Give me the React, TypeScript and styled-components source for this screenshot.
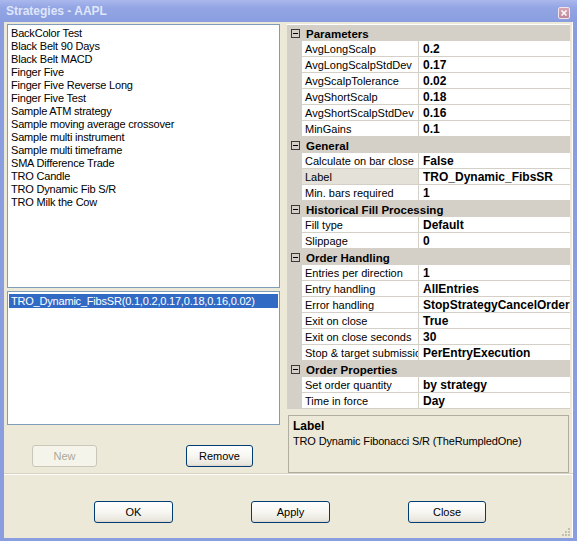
import React from "react";
import styled, { createGlobalStyle } from "styled-components";

const GlobalStyle = createGlobalStyle`
	html, body {
		margin: 0;
		padding: 0;
		background: #fff;
	}
	body {
		font-family: "Liberation Sans", Arial, sans-serif;
		font-size: 11px;
		color: #000;
	}
`;

const Window = styled.div`
	width: 577px;
	height: 541px;
	display: flex;
	flex-direction: column;
	background: #8a9ddf;
	overflow: hidden;
`;

const TitleBar = styled.div`
	height: 22px;
	flex: none;
	display: flex;
	align-items: center;
	justify-content: space-between;
	padding: 0 7px 0 6px;
	background: linear-gradient(#aab8ec 0%, #93a5e4 35%, #8a9ddf 100%);
`;

const TitleText = styled.span`
	font-weight: bold;
	font-size: 12px;
	color: #dfe6fa;
`;

const CloseBox = styled.div`
	width: 10px;
	height: 10px;
	margin-top: 3px;
	border: 1px solid #f2e4ea;
	border-radius: 2px;
	background: linear-gradient(#d9a6b4, #c0889b);
	display: flex;
	align-items: center;
	justify-content: center;
`;

const Frame = styled.div`
	flex: 1;
	display: flex;
	padding: 0 4px 3px 4px;
	min-height: 0;
`;

const Client = styled.div`
	position: relative;
	flex: 1;
	display: flex;
	flex-direction: column;
	background: #ece9d8;
	box-shadow: inset -1px 0 0 #fff;
`;

const TopPanel = styled.div`
	height: 452px;
	display: flex;
	gap: 7px;
	padding: 2px 0 0 3px;
	box-sizing: border-box;
	border-bottom: 1px solid #d6d2c2;
`;

const LeftColumn = styled.div`
	width: 273px;
	display: flex;
	flex-direction: column;
`;

const ListBox = styled.div<{ $h: number; $top?: number }>`
	height: ${(p) => p.$h}px;
	margin-top: ${(p) => p.$top || 0}px;
	box-sizing: border-box;
	border: 1px solid #7f9db9;
	background: #fff;
	padding: 2px 1px;
	overflow: hidden;
`;

const ListItem = styled.div<{ $selected?: boolean }>`
	height: ${(p) => (p.$selected ? 14 : 13)}px;
	line-height: ${(p) => (p.$selected ? 14 : 13)}px;
	padding-left: 2px;
	letter-spacing: -0.2px;
	white-space: nowrap;
	background: ${(p) => (p.$selected ? "#316ac5" : "transparent")};
	color: ${(p) => (p.$selected ? "#fff" : "#000")};
`;

const ListButtons = styled.div`
	display: flex;
	margin-top: 20px;
	padding-left: 25px;
	gap: 89px;
`;

const Button = styled.button<{ $w: number }>`
	width: ${(p) => p.$w}px;
	height: 22px;
	padding: 0;
	box-sizing: border-box;
	border: 1px solid #003c74;
	border-radius: 3px;
	background: linear-gradient(#ffffff 0%, #f7f6f2 50%, #e9e7de 90%, #dad6ca 100%);
	font-family: "Liberation Sans", Arial, sans-serif;
	font-size: 11px;
	color: #000;

	&:disabled {
		border-color: #c9c7ba;
		background: #f5f4ea;
		color: #aca899;
	}
`;

const RightColumn = styled.div`
	width: 283px;
	display: flex;
	flex-direction: column;
`;

const PropGrid = styled.div`
	height: 385px;
	box-sizing: border-box;
	padding-top: 1px;
	background: #fff;
	overflow: hidden;
`;

const CategoryRow = styled.div`
	height: 16px;
	display: flex;
	align-items: center;
	padding-top: 1px;
	box-sizing: border-box;
	background: #d4d0c8;
	font-weight: bold;
	font-size: 11.5px;
	white-space: nowrap;
`;

const ExpandBox = styled.span`
	width: 9px;
	height: 9px;
	margin: 0 6px 0 4px;
	box-sizing: border-box;
	border: 1px solid #3a3a3a;
	display: flex;
	align-items: center;
	justify-content: center;

	&::after {
		content: "";
		width: 5px;
		height: 1px;
		background: #000;
	}
`;

const PropRow = styled.div`
	height: 16px;
	display: flex;
`;

const Gutter = styled.div`
	width: 15px;
	flex: none;
	background: #d4d0c8;
`;

const NameCell = styled.div<{ $selected?: boolean }>`
	width: 117px;
	flex: none;
	box-sizing: border-box;
	padding: 1px 0 0 3px;
	line-height: 15px;
	border-right: 1px solid #d4d0c8;
	border-bottom: 1px solid #d4d0c8;
	background: ${(p) => (p.$selected ? "#e4e1d8" : "#fff")};
	white-space: nowrap;
	overflow: hidden;
`;

const ValueCell = styled.div`
	flex: 1;
	box-sizing: border-box;
	padding: 1px 0 0 4px;
	line-height: 15px;
	border-bottom: 1px solid #d4d0c8;
	font-weight: bold;
	font-size: 12px;
	white-space: nowrap;
	overflow: hidden;
`;

const Description = styled.div`
	height: 58px;
	margin: 6px 1px 0 1px;
	box-sizing: border-box;
	border: 1px solid #b2ae9f;
	padding: 3px 4px;
	line-height: 15px;
`;

const DescTitle = styled.div`
	font-weight: bold;
	font-size: 12px;
`;

const DescText = styled.div`
	letter-spacing: -0.15px;
`;

const BottomPanel = styled.div`
	flex: 1;
	display: flex;
	align-items: flex-start;
	padding: 26px 0 0 90px;
	gap: 78px;
	border-top: 1px solid #fff;
`;

const Grip = styled.svg`
	position: absolute;
	right: 3px;
	bottom: 2px;
`;

const strategies = [
	"BackColor Test",
	"Black Belt 90 Days",
	"Black Belt MACD",
	"Finger Five",
	"Finger Five Reverse Long",
	"Finger Five Test",
	"Sample ATM strategy",
	"Sample moving average crossover",
	"Sample multi instrument",
	"Sample multi timeframe",
	"SMA Difference Trade",
	"TRO Candle",
	"TRO Dynamic Fib S/R",
	"TRO Milk the Cow",
];

type Prop = { name: string; value: string; selected?: boolean };

const categories: { title: string; props: Prop[] }[] = [
	{
		title: "Parameters",
		props: [
			{ name: "AvgLongScalp", value: "0.2" },
			{ name: "AvgLongScalpStdDev", value: "0.17" },
			{ name: "AvgScalpTolerance", value: "0.02" },
			{ name: "AvgShortScalp", value: "0.18" },
			{ name: "AvgShortScalpStdDev", value: "0.16" },
			{ name: "MinGains", value: "0.1" },
		],
	},
	{
		title: "General",
		props: [
			{ name: "Calculate on bar close", value: "False" },
			{ name: "Label", value: "TRO_Dynamic_FibsSR", selected: true },
			{ name: "Min. bars required", value: "1" },
		],
	},
	{
		title: "Historical Fill Processing",
		props: [
			{ name: "Fill type", value: "Default" },
			{ name: "Slippage", value: "0" },
		],
	},
	{
		title: "Order Handling",
		props: [
			{ name: "Entries per direction", value: "1" },
			{ name: "Entry handling", value: "AllEntries" },
			{ name: "Error handling", value: "StopStrategyCancelOrders" },
			{ name: "Exit on close", value: "True" },
			{ name: "Exit on close seconds", value: "30" },
			{ name: "Stop & target submission", value: "PerEntryExecution" },
		],
	},
	{
		title: "Order Properties",
		props: [
			{ name: "Set order quantity", value: "by strategy" },
			{ name: "Time in force", value: "Day" },
		],
	},
];

const App = () => {
	return (
		<>
			<GlobalStyle />
			<Window>
				<TitleBar>
					<TitleText>Strategies - AAPL</TitleText>
					<CloseBox>
						<svg width="6" height="6" viewBox="0 0 6 6">
							<path d="M0.5 0.5 L5.5 5.5 M5.5 0.5 L0.5 5.5" stroke="#fff" strokeWidth="1.5" />
						</svg>
					</CloseBox>
				</TitleBar>
				<Frame>
					<Client>
						<TopPanel>
							<LeftColumn>
								<ListBox $h={264}>
									{strategies.map((s) => (
										<ListItem key={s}>{s}</ListItem>
									))}
								</ListBox>
								<ListBox $h={134} $top={3}>
									<ListItem $selected>TRO_Dynamic_FibsSR(0.1,0.2,0.17,0.18,0.16,0.02)</ListItem>
								</ListBox>
								<ListButtons>
									<Button $w={65} disabled>
										New
									</Button>
									<Button $w={67}>Remove</Button>
								</ListButtons>
							</LeftColumn>
							<RightColumn>
								<PropGrid>
									{categories.map((c) => (
										<React.Fragment key={c.title}>
											<CategoryRow>
												<ExpandBox />
												{c.title}
											</CategoryRow>
											{c.props.map((p) => (
												<PropRow key={p.name}>
													<Gutter />
													<NameCell $selected={p.selected}>{p.name}</NameCell>
													<ValueCell>{p.value}</ValueCell>
												</PropRow>
											))}
										</React.Fragment>
									))}
								</PropGrid>
								<Description>
									<DescTitle>Label</DescTitle>
									<DescText>TRO Dynamic Fibonacci S/R (TheRumpledOne)</DescText>
								</Description>
							</RightColumn>
						</TopPanel>
						<BottomPanel>
							<Button $w={79}>OK</Button>
							<Button $w={79}>Apply</Button>
							<Button $w={78}>Close</Button>
						</BottomPanel>
						<Grip width="10" height="10" viewBox="0 0 10 10">
							{[
								[8, 2],
								[5, 5],
								[8, 5],
								[2, 8],
								[5, 8],
								[8, 8],
							].map(([x, y]) => (
								<rect key={`${x}-${y}`} x={x} y={y} width="2" height="2" fill="#c4c0b0" />
							))}
						</Grip>
					</Client>
				</Frame>
			</Window>
		</>
	);
};

export default App;
